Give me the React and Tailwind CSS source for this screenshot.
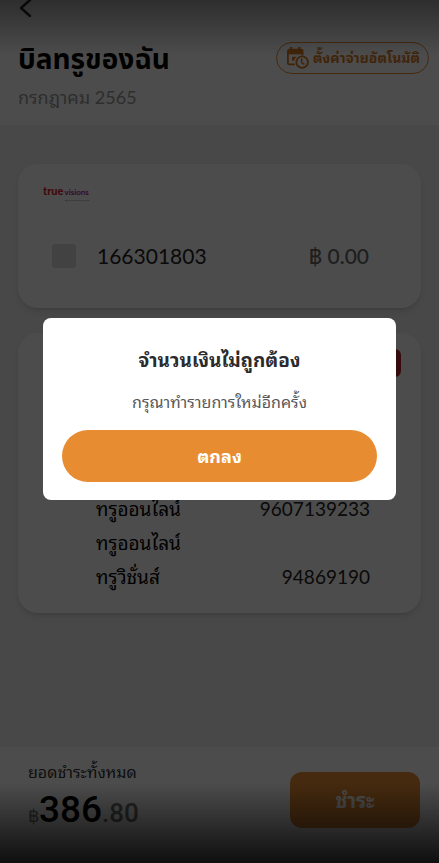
import { useState } from 'react';

const services = [
  { id: 1, name: 'ทรูออนไลน์', account: '9607139233' },
  { id: 2, name: 'ทรูออนไลน์', account: '' },
  { id: 3, name: 'ทรูวิชั่นส์', account: '94869190' },
];

const CalendarClockIcon = () => (
  <svg className="w-[22px] h-[22px] shrink-0" viewBox="0 0 24 24" fill="none" stroke="currentColor" aria-hidden="true">
    <path d="M8.500 19H2.500A1.500 1.500 0 0 1 1 17.500V4.500A1.500 1.500 0 0 1 2.500 3h13A1.500 1.500 0 0 1 17 4.500V9" strokeWidth="2" />
    <path d="M1 3h16v5H1z" fill="currentColor" stroke="none" />
    <path d="M4.500 0v5M13.500 0v5" strokeWidth="2.500" />
    <path d="M5.500 10.500h5l-2 2.200-.8 2.300H5.500z" fill="currentColor" stroke="none" />
    <circle cx="16.500" cy="16.500" r="6.300" strokeWidth="2" />
    <path d="M16 12.500v4.500l3 2" strokeWidth="1.600" />
  </svg>
);

const TrueVisionsLogo = () => (
  <div className="ml-px flex h-5 w-fit flex-col items-end">
    <div className="flex items-baseline gap-px leading-[14px]">
      <span className="text-[11px] font-black text-[#d8232a]">true</span>
      <span className="text-[8px] font-bold text-[#b0248f]">visions</span>
    </div>
    <svg className="h-1 w-6" viewBox="0 0 24 4" fill="none" stroke="#bbb" aria-hidden="true">
      <path d="M0 1.500h24" strokeDasharray="2 .6 1.400 .6" />
    </svg>
  </div>
);

const ErrorDialog = ({ onClose }) => (
  <div className="fixed inset-0 z-10 flex items-center justify-center bg-black/70 px-[43px] pb-[45px]">
    <div
      role="alertdialog"
      aria-modal="true"
      aria-labelledby="dialog-title"
      aria-describedby="dialog-text"
      className="w-full max-w-sm rounded-lg bg-white px-[19px] pt-7 pb-[18px] text-center"
    >
      <h2 id="dialog-title" className="text-[19px] leading-7 font-bold text-[#2b2b2e]">
        จำนวนเงินไม่ถูกต้อง
      </h2>
      <p id="dialog-text" className="mt-4 text-base leading-6 text-[#58585a]">
        กรุณาทำรายการใหม่อีกครั้ง
      </p>
      <button
        type="button"
        onClick={onClose}
        className="mt-4 h-13 w-full rounded-full bg-[#e88c32] text-lg font-bold text-white"
      >
        ตกลง
      </button>
    </div>
  </div>
);

const App = () => {
  const [showError, setShowError] = useState(true);
  const [selected, setSelected] = useState(false);

  return (
    <div className="relative flex min-h-screen flex-col bg-[#f0f0f0] font-['Lato','Noto_Sans_Thai_Looped','Loma','Garuda','Waree',sans-serif] text-black">
      {/* Header */}
      <header className="bg-white px-[18px] pb-4">
        <button type="button" aria-label="Back" className="block h-8">
          <svg className="h-[18px] w-4 -mt-4" viewBox="0 0 16 18" fill="none" stroke="#333" strokeWidth="2.500" strokeLinecap="round" strokeLinejoin="round">
            <path d="M12 1L3 9l9 8" />
          </svg>
        </button>
        <div className="-mr-2 flex items-center justify-between">
          <h1 className="font-['Lato','Noto_Sans_Thai',sans-serif] text-[28px] leading-[52px] font-bold">บิลทรูของฉัน</h1>
          <button
            type="button"
            className="flex h-8 items-center gap-1 rounded-full border border-[#e88c32] pr-2 pl-2.5 text-sm font-bold text-[#d67a22]"
          >
            <CalendarClockIcon />
            ตั้งค่าจ่ายอัตโนมัติ
          </button>
        </div>
        <p className="mt-px text-lg leading-6 text-[#999]">กรกฎาคม 2565</p>
      </header>

      <main className="flex flex-col gap-[25px] px-[18px] pt-[39px] pb-6">
        {/* TrueVisions bill */}
        <section className="h-36 rounded-[20px] bg-white px-6 pt-5 shadow-md">
          <TrueVisionsLogo />
          <div className="mt-9 flex items-center pr-7 pl-2.5">
            <input
              id="bill"
              type="checkbox"
              checked={selected}
              onChange={(e) => setSelected(e.target.checked)}
              className="h-6 w-6 appearance-none rounded-sm bg-[#dcdcdc] checked:bg-[#e88c32]"
            />
            <label htmlFor="bill" className="ml-[21px] text-[21px] leading-8 text-[#222]">166301803</label>
            <span className="ml-auto text-[21px] leading-8 font-medium text-[#666]">฿ 0.00</span>
          </div>
        </section>

        {/* Combined bill */}
        <section className="flex min-h-[280px] flex-col justify-between rounded-[20px] bg-white pt-4 pb-[19px] shadow-md">
          <span className="mr-5 h-7 w-24 self-end rounded-md bg-[#b8262c]" />
          <ul className="pr-[51px] pl-[78px] text-[19px] leading-[34px]">
            {services.map((service) => (
              <li key={service.id} className="flex justify-between">
                <span>{service.name}</span>
                <span className="text-[#222]">{service.account}</span>
              </li>
            ))}
          </ul>
        </section>
      </main>

      {/* Total */}
      <footer className="mt-auto flex items-center justify-between bg-white pt-[13px] pr-[19px] pb-6 pl-7">
        <div>
          <p className="text-base leading-6 text-[#333]">ยอดชำระทั้งหมด</p>
          <p className="flex items-baseline font-['Roboto',sans-serif] text-[37px] leading-[52px] font-medium">
            <span className="font-['Liberation_Sans',sans-serif] text-lg font-normal text-[#777]">฿</span>
            <span>386</span>
            <span className="text-[26px] text-[#737373]">.80</span>
          </p>
        </div>
        <button type="button" className="h-14 w-[130px] rounded-xl bg-[#e88c32] text-xl font-bold text-white">
          ชำระ
        </button>
      </footer>

      <div className="pointer-events-none absolute inset-x-0 top-0 h-14 bg-linear-to-b from-black/40 to-transparent" />
      <div className="pointer-events-none absolute inset-x-0 bottom-0 h-20 bg-linear-to-t from-black/80 to-transparent" />

      {showError && <ErrorDialog onClose={() => setShowError(false)} />}
    </div>
  );
};

export default App;
